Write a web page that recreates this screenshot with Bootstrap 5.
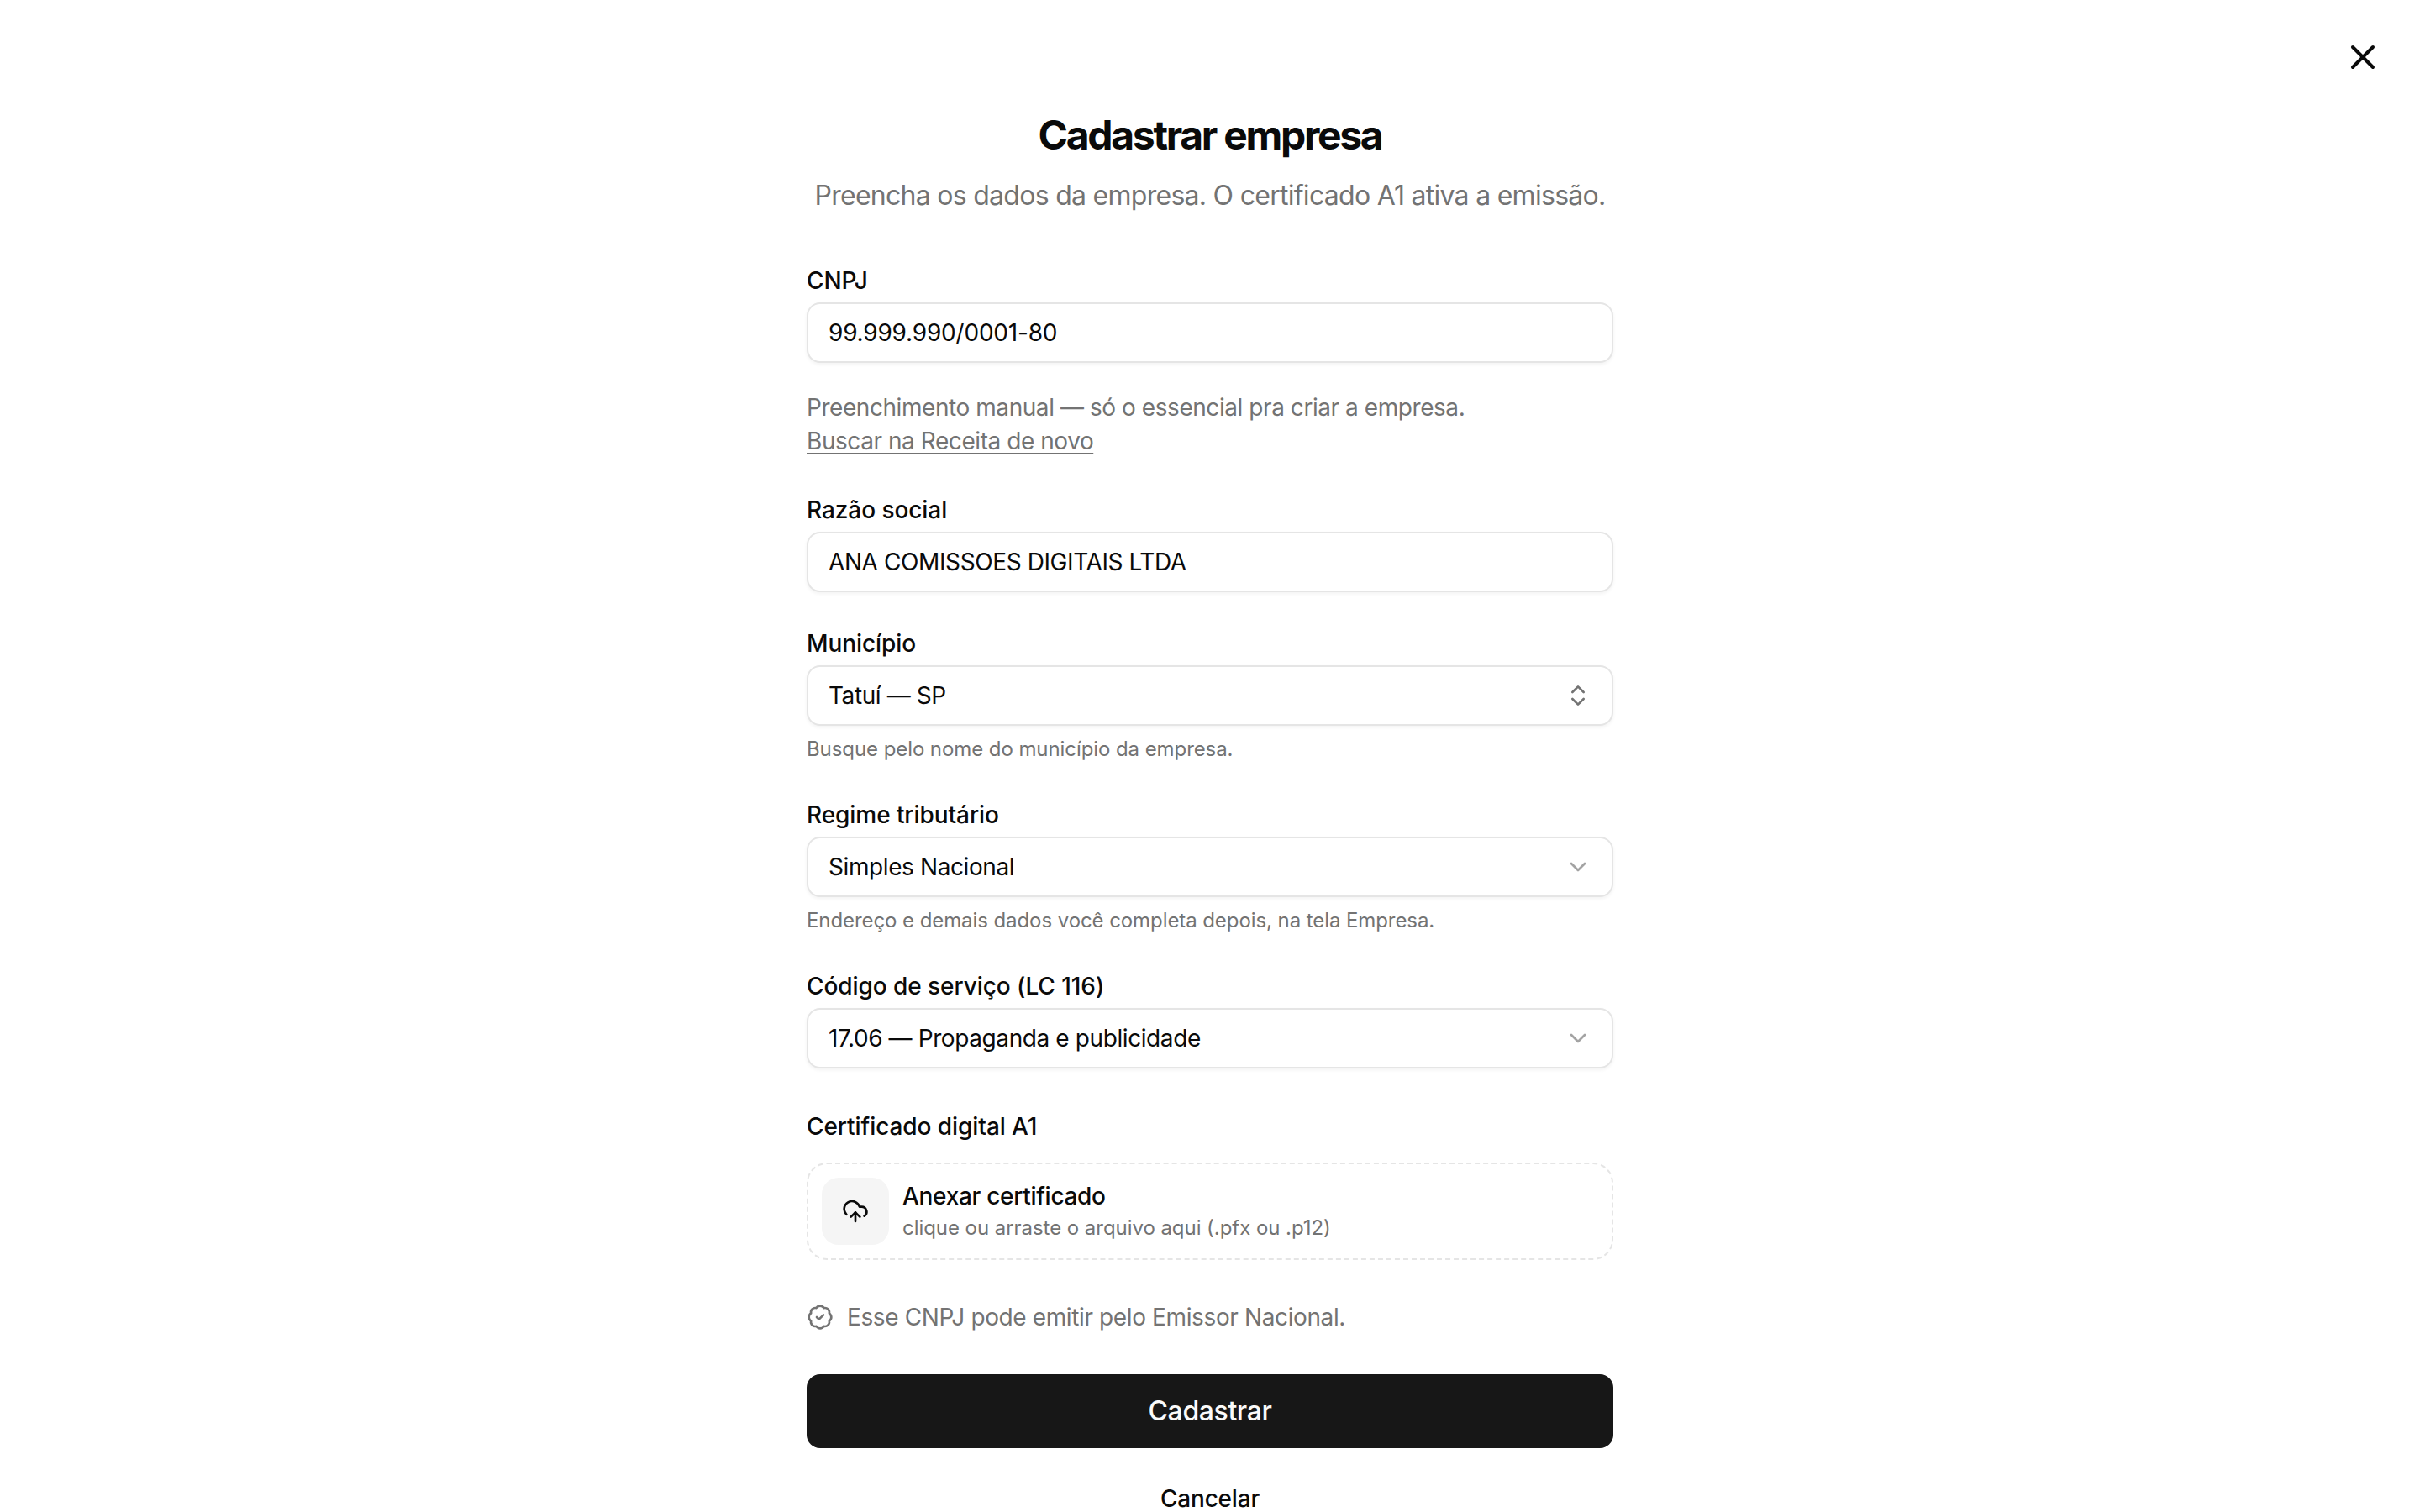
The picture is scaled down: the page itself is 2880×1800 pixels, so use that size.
<!DOCTYPE html>
<html lang="pt-BR">
<head>
<meta charset="utf-8">
<title>Cadastrar empresa</title>
<link rel="stylesheet" href="https://cdn.jsdelivr.net/npm/bootstrap@5.3.0/dist/css/bootstrap.min.css">
<style>
html,body{height:100%;}
body{font-family:Inter,"Liberation Sans",sans-serif;color:#0a0a0a;background:#fff;overflow:hidden;-webkit-font-smoothing:antialiased;}
.page-shell{width:960px;padding-top:129px;}
.close-btn{position:absolute;top:44px;right:44px;width:48px;height:48px;background:none;border:0;padding:0;color:#0a0a0a;display:flex;}
.page-title{font-size:48px;line-height:64px;font-weight:700;letter-spacing:-2.3px;margin:0;}
.page-sub{font-size:32px;line-height:48px;color:#737373;margin:16px 0 0;letter-spacing:-.72px;white-space:nowrap;}
.fld-label{display:block;font-size:28px;line-height:40px;font-weight:500;margin:0 0 6px;letter-spacing:-.07px;}
.fld-box.form-control{height:72px;border:2px solid #e5e5e5;border-radius:16px;padding:0 24px;font-size:28px;line-height:40px;color:#0a0a0a;box-shadow:0 2px 4px rgba(0,0,0,.05);background:#fff;letter-spacing:-.4px;}
.fld-box.fld-digits{letter-spacing:-.2px;}
.sel-box{width:100%;text-align:left;}
.sel-box svg{width:32px;height:32px;flex:none;}
.ico-updown{color:#737373;}
.ico-down{color:#a3a3a3;}
.help-text{font-size:28px;line-height:40px;color:#737373;letter-spacing:-.44px;margin-top:33px;}
.help-text a{color:#737373;text-underline-offset:4px;}
.hint-text{font-size:24px;line-height:32px;color:#737373;margin-top:12px;letter-spacing:-.08px;}
.gap-top{margin-top:57px;}
.gap-a{margin-top:42px;}
.gap-b{margin-top:41px;}
.gap-c{margin-top:49px;}
.drop-zone{border:2px dashed #e5e5e5;border-radius:24px;padding:16px;gap:16px;margin-top:23px;}
.drop-tile{width:80px;height:80px;background:#f5f5f5;border-radius:20px;flex:none;}
.drop-tile svg{width:32px;height:32px;}
.drop-title{font-size:28px;line-height:36px;margin-bottom:4px;font-weight:500;letter-spacing:-.3px;}
.drop-sub{font-size:24px;line-height:32px;color:#737373;letter-spacing:-.05px;}
.status-line{font-size:28px;line-height:40px;color:#737373;gap:16px;margin-top:48px;letter-spacing:-.38px;}
.status-line svg{width:32px;height:32px;flex:none;}
.main-btn.btn{height:88px;width:100%;background:#171717;border:0;color:#fafafa;font-size:32px;font-weight:500;border-radius:16px;margin-top:48px;letter-spacing:-.4px;}
.ghost-btn.btn{width:100%;background:none;border:0;color:#0a0a0a;font-size:28px;line-height:40px;font-weight:500;padding:0;margin-top:40px;letter-spacing:-.2px;}
</style>
</head>
<body>
<button type="button" class="close-btn" aria-label="Fechar">
  <svg viewBox="0 0 24 24" width="48" height="48" fill="none" stroke="currentColor" stroke-width="2" stroke-linecap="round" stroke-linejoin="round"><path d="M18 6 6 18"/><path d="m6 6 12 12"/></svg>
</button>
<main class="page-shell mx-auto">
  <div class="text-center d-flex flex-column align-items-center">
    <h1 class="page-title">Cadastrar empresa</h1>
    <p class="page-sub">Preencha os dados da empresa. O certificado A1 ativa a emissão.</p>
  </div>
  <form>
    <div class="gap-top">
      <label class="fld-label" for="cnpj">CNPJ</label>
      <input id="cnpj" class="form-control fld-box fld-digits" value="99.999.990/0001-80">
    </div>
    <div class="help-text">
      Preenchimento manual — só o essencial pra criar a empresa.<br>
      <a href="#">Buscar na Receita de novo</a>
    </div>
    <div class="gap-a">
      <label class="fld-label" for="razao">Razão social</label>
      <input id="razao" class="form-control fld-box" value="ANA COMISSOES DIGITAIS LTDA">
    </div>
    <div class="gap-b">
      <label class="fld-label">Município</label>
      <button type="button" class="form-control fld-box sel-box d-flex align-items-center justify-content-between">
        <span>Tatuí — SP</span>
        <svg class="ico-updown" viewBox="0 0 24 24" fill="none" stroke="currentColor" stroke-width="2" stroke-linecap="round" stroke-linejoin="round"><path d="m7 15 5 5 5-5"/><path d="m7 9 5-5 5 5"/></svg>
      </button>
      <div class="hint-text">Busque pelo nome do município da empresa.</div>
    </div>
    <div class="gap-a">
      <label class="fld-label">Regime tributário</label>
      <button type="button" class="form-control fld-box sel-box d-flex align-items-center justify-content-between">
        <span>Simples Nacional</span>
        <svg class="ico-down" viewBox="0 0 24 24" fill="none" stroke="currentColor" stroke-width="2" stroke-linecap="round" stroke-linejoin="round"><path d="m6 9 6 6 6-6"/></svg>
      </button>
      <div class="hint-text">Endereço e demais dados você completa depois, na tela Empresa.</div>
    </div>
    <div class="gap-a">
      <label class="fld-label">Código de serviço (LC 116)</label>
      <button type="button" class="form-control fld-box sel-box d-flex align-items-center justify-content-between">
        <span>17.06 — Propaganda e publicidade</span>
        <svg class="ico-down" viewBox="0 0 24 24" fill="none" stroke="currentColor" stroke-width="2" stroke-linecap="round" stroke-linejoin="round"><path d="m6 9 6 6 6-6"/></svg>
      </button>
    </div>
    <div class="gap-c">
      <div class="fld-label mb-0">Certificado digital A1</div>
      <div class="drop-zone d-flex align-items-center">
        <div class="drop-tile d-flex align-items-center justify-content-center">
          <svg viewBox="0 0 24 24" fill="none" stroke="currentColor" stroke-width="2" stroke-linecap="round" stroke-linejoin="round"><path d="M12 13v8"/><path d="M4 14.899A7 7 0 1 1 15.71 8h1.79a4.5 4.5 0 0 1 2.5 8.242"/><path d="m8 17 4-4 4 4"/></svg>
        </div>
        <div>
          <div class="drop-title">Anexar certificado</div>
          <div class="drop-sub">clique ou arraste o arquivo aqui (.pfx ou .p12)</div>
        </div>
      </div>
    </div>
    <div class="status-line d-flex align-items-center">
      <svg viewBox="0 0 24 24" fill="none" stroke="currentColor" stroke-width="2" stroke-linecap="round" stroke-linejoin="round"><path d="M3.85 8.62a4 4 0 0 1 4.78-4.77 4 4 0 0 1 6.74 0 4 4 0 0 1 4.78 4.78 4 4 0 0 1 0 6.74 4 4 0 0 1-4.77 4.78 4 4 0 0 1-6.75 0 4 4 0 0 1-4.78-4.77 4 4 0 0 1 0-6.76Z"/><path d="m9 12 2 2 4-4"/></svg>
      <span>Esse CNPJ pode emitir pelo Emissor Nacional.</span>
    </div>
    <button type="button" class="btn main-btn">Cadastrar</button>
    <button type="button" class="btn ghost-btn">Cancelar</button>
  </form>
</main>
<script src="https://cdn.jsdelivr.net/npm/bootstrap@5.3.0/dist/js/bootstrap.bundle.min.js"></script>
</body>
</html>
